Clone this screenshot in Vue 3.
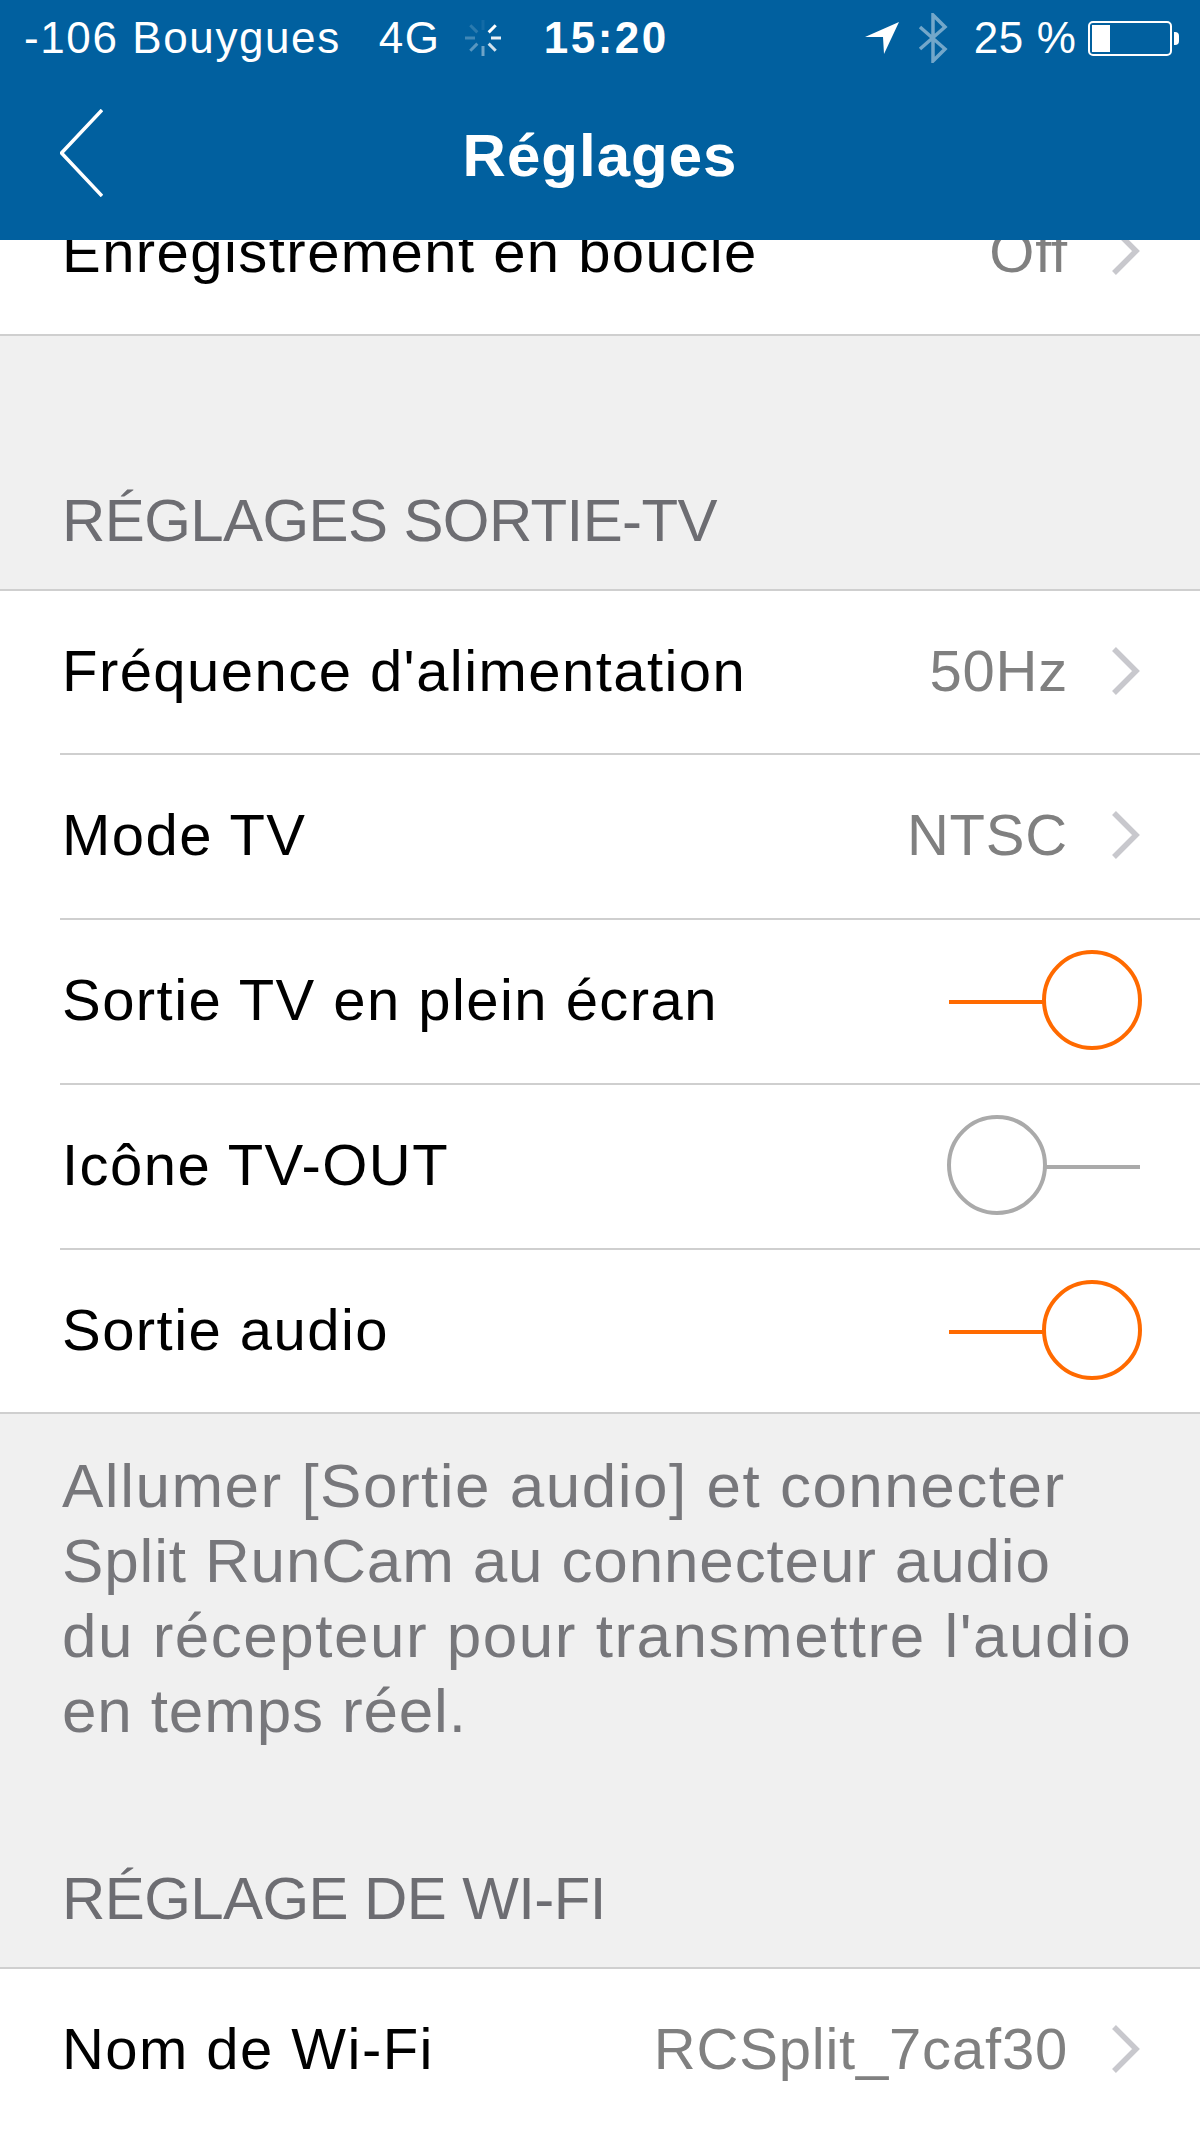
<script setup>
const tvRows = [
  { label: "Fréquence d'alimentation", value: '50Hz' },
  { label: 'Mode TV', value: 'NTSC' },
  { label: 'Sortie TV en plein écran', on: true },
  { label: 'Icône TV-OUT', on: false },
  { label: 'Sortie audio', on: true },
]
const spokes = [0, 45, 90, 135, 180, 225, 270, 315]
</script>

<template>
  <div class="screen">
    <header class="top">
      <div class="status">
        <span class="carrier">-106 Bouygues</span>
        <span class="net">4G</span>
        <svg class="spinner" width="40" height="40" viewBox="-20 -20 40 40">
          <line v-for="(a, i) in spokes" :key="a" x1="0" y1="-8" x2="0" y2="-18"
            stroke="#fff" stroke-width="3" :opacity="1 - i * 0.09 - (i > 2 ? 0.3 : 0)" :transform="`rotate(${a + 45})`" />
        </svg>
        <span class="clock">15:20</span>
        <svg class="arrow" width="34" height="32" viewBox="0 0 34 32">
          <path d="M0 15 L34 0 L19 32 L18 15 Z" fill="#fff" />
        </svg>
        <svg class="bt" width="30" height="50" viewBox="0 0 30 50">
          <path d="M2 14 L27 36 L15 48 V2 L27 14 L2 36" fill="none" stroke="#fff" stroke-opacity="0.45" stroke-width="3.5" />
        </svg>
        <span class="pct">25 %</span>
        <div class="battery"><i></i></div>
        <div class="nub"></div>
      </div>
      <div class="nav">
        <svg class="back" width="43" height="88" viewBox="0 0 43 88">
          <path d="M42 1 L1.5 44 L42 87" fill="none" stroke="#fff" stroke-width="3.5" />
        </svg>
        <span class="title">Réglages</span>
      </div>
    </header>

    <div class="cut-row">
      <span class="label">Enregistrement en boucle</span>
      <span class="value">Off</span>
      <svg class="chev" width="28" height="48" viewBox="0 0 28 48"><path d="M2 2 L24 24 L2 46" fill="none" stroke="#c8c8cd" stroke-width="5.5" /></svg>
    </div>

    <div class="section-head first">RÉGLAGES SORTIE-TV</div>
    <div class="group">
      <div v-for="row in tvRows" :key="row.label" class="row">
        <span class="label">{{ row.label }}</span>
        <template v-if="row.value">
          <span class="value">{{ row.value }}</span>
          <svg class="chev" width="28" height="48" viewBox="0 0 28 48"><path d="M2 2 L24 24 L2 46" fill="none" stroke="#c8c8cd" stroke-width="5.5" /></svg>
        </template>
        <div v-else class="toggle" :class="{ on: row.on }">
          <div class="track"></div>
          <div class="knob"></div>
        </div>
      </div>
    </div>

    <div class="note">
      <p class="wide">Allumer [Sortie audio] et connecter</p>
      <p class="tight">Split RunCam au connecteur audio</p>
      <p class="wide">du récepteur pour transmettre l'audio</p>
      <p class="tight">en temps réel.</p>
    </div>

    <div class="section-head">RÉGLAGE DE WI-FI</div>
    <div class="group">
      <div class="row">
        <span class="label">Nom de Wi-Fi</span>
        <span class="value">RCSplit_7caf30</span>
        <svg class="chev" width="28" height="48" viewBox="0 0 28 48"><path d="M2 2 L24 24 L2 46" fill="none" stroke="#c8c8cd" stroke-width="5.5" /></svg>
      </div>
    </div>
  </div>
</template>

<style>
body { background: #f0f0f0; }
</style>

<style scoped>
.screen {
  width: 1200px;
  height: 2130px;
  overflow: hidden;
  background: #f0f0f0;
  font-family: "Liberation Sans", Arial, sans-serif;
  color: #000;
}
.top {
  height: 240px;
  background: #01609f;
  color: #fff;
  display: flex;
  flex-direction: column;
}
.status {
  height: 76px;
  padding-left: 24px;
  display: flex;
  align-items: center;
  font-size: 44px;
  letter-spacing: 1.6px;
}
.net { margin-left: 38px; }
.spinner { margin-left: 22px; flex: none; }
.clock {
  margin-left: 41px;
  font-weight: 700;
  letter-spacing: 2.5px;
}
.arrow { margin-left: 196px; flex: none; }
.bt { margin-left: 19px; flex: none; }
.pct { margin-left: 26px; letter-spacing: 0.6px; }
.battery {
  width: 84px;
  height: 35px;
  box-sizing: border-box;
  margin-left: 12px;
  border: 2px solid #fff;
  border-radius: 5px;
  padding: 2px;
}
.battery i {
  display: block;
  width: 18px;
  height: 100%;
  background: #fff;
}
.nub {
  width: 5px;
  height: 13px;
  margin-left: 2px;
  background: #fff;
  border-radius: 0 4px 4px 0;
}
.nav {
  flex: 1;
  position: relative;
  display: flex;
  align-items: center;
  justify-content: center;
  padding-bottom: 5px;
}
.back {
  position: absolute;
  left: 60px;
  top: 33px;
}
.title {
  font-size: 60px;
  font-weight: 700;
  letter-spacing: 1px;
}
.cut-row {
  height: 96px;
  box-sizing: border-box;
  background: #fff;
  border-bottom: 2px solid #cfcfcf;
  padding: 0 60px 0 62px;
  display: flex;
  align-items: flex-start;
  overflow: hidden;
}
.cut-row .label, .cut-row .value {
  margin-top: -23px;
}
.cut-row .chev { margin-top: -13px; }
.section-head {
  height: 120px;
  box-sizing: border-box;
  padding: 0 62px 33px;
  display: flex;
  align-items: flex-end;
  font-size: 60px;
  line-height: 70px;
  letter-spacing: -0.6px;
  color: #6d6d72;
}
.section-head.first { margin-top: 133px; }
.group {
  background: #fff;
  border-top: 2px solid #cfcfcf;
  border-bottom: 2px solid #cfcfcf;
}
.row {
  height: 165px;
  box-sizing: border-box;
  margin-left: 60px;
  padding: 0 60px 3px 2px;
  display: flex;
  align-items: center;
  border-bottom: 2px solid #cfcfcf;
}
.row:first-child { height: 164px; }
.row:last-child { border-bottom: 0; height: 162px; }
.label {
  font-size: 58px;
  line-height: 70px;
  letter-spacing: 1.45px;
  white-space: nowrap;
}
.value {
  margin-left: auto;
  font-size: 58px;
  line-height: 70px;
  letter-spacing: 0.8px;
  color: #808080;
}
.chev {
  flex: none;
  margin-left: 44px;
}
.toggle {
  margin-left: auto;
  position: relative;
  width: 193px;
  height: 100px;
  --c: #aaaaaa;
}
.toggle.on { --c: #ff6a00; }
.track {
  position: absolute;
  left: 2px;
  right: 0;
  top: 50px;
  height: 4px;
  background: var(--c);
}
.knob {
  position: absolute;
  top: 0;
  left: 0;
  width: 100px;
  height: 100px;
  box-sizing: border-box;
  border: 4px solid var(--c);
  border-radius: 50%;
  background: #fff;
}
.toggle.on .knob {
  left: auto;
  right: -2px;
}
.note {
  height: 433px;
  box-sizing: border-box;
  padding: 34px 0 0 62px;
  font-size: 62px;
  line-height: 75px;
  white-space: nowrap;
  color: #77777b;
}
.note p { margin: 0; }
.note .wide { letter-spacing: 1.5px; }
.note .tight { letter-spacing: 0.85px; }
</style>
